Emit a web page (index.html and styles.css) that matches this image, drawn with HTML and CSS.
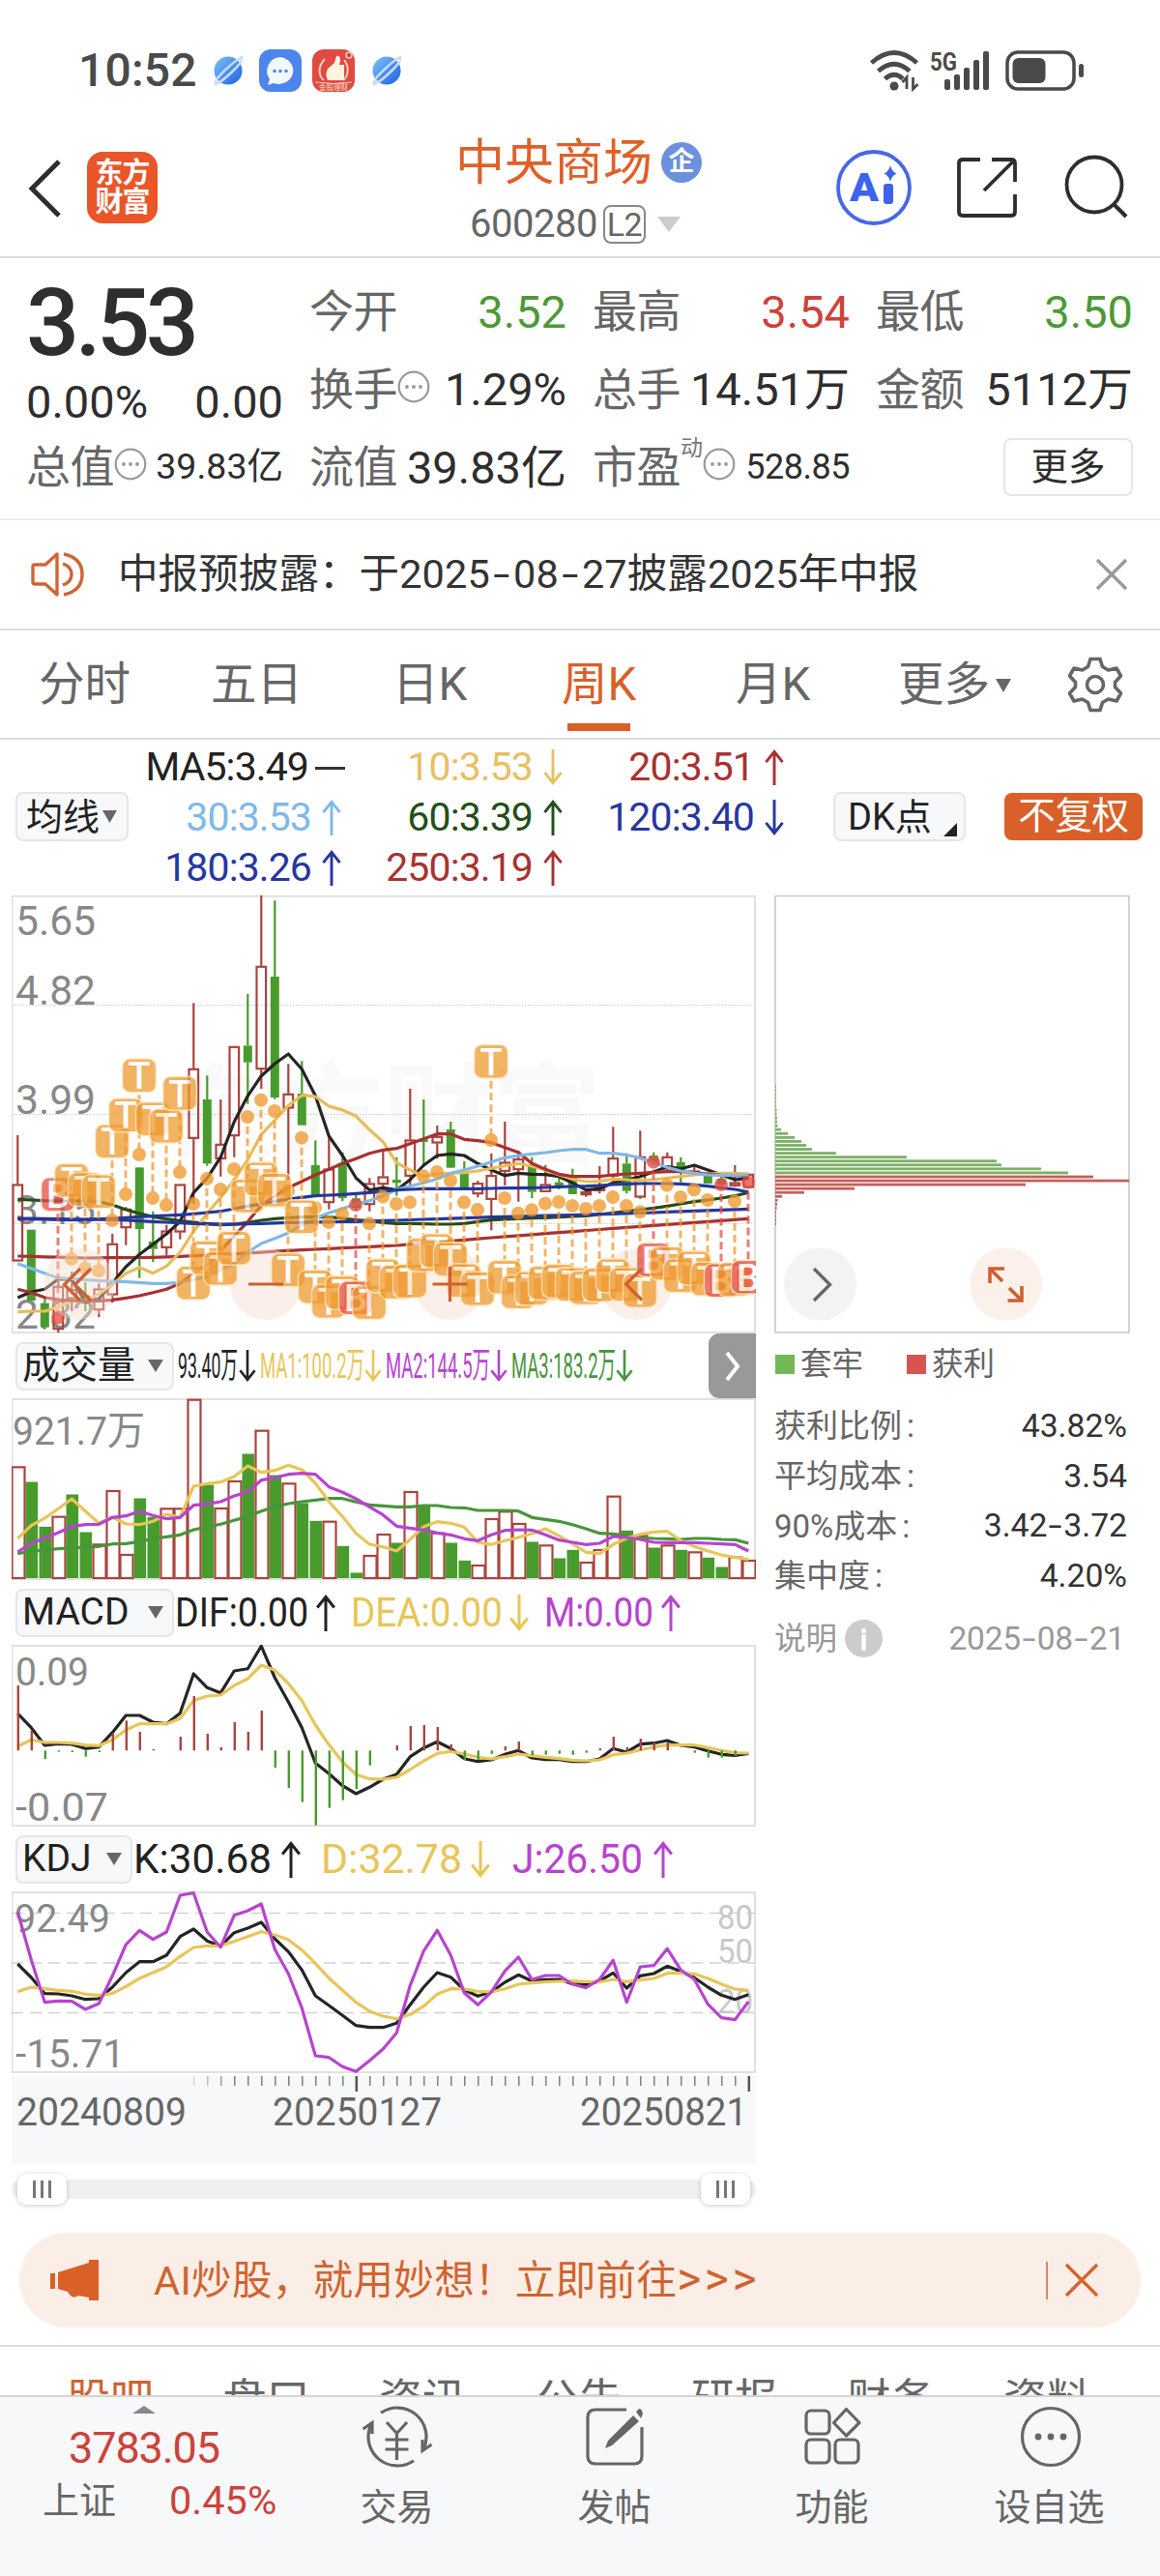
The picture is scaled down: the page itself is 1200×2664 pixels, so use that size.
FILE: index.html
```html
<!DOCTYPE html>
<html lang="zh-CN">
<head>
<meta charset="utf-8">
<title>中央商场 600280</title>
<link rel="stylesheet" href="styles.css">
</head>
<body>
<svg class="defs" width="0" height="0" aria-hidden="true">
  <defs>
    <symbol id="up" viewBox="0 0 20 38"><path d="M10 38V3M1.2 13.500L10 2.500L18.800 13.500" fill="none" stroke="currentColor" stroke-width="3"/></symbol>
    <symbol id="down" viewBox="0 0 20 38"><path d="M10 0V35M1.200 24.500L10 35.500L18.800 24.500" fill="none" stroke="currentColor" stroke-width="3"/></symbol>
    <symbol id="dots" viewBox="0 0 34 34"><circle cx="17" cy="17" r="15.300" fill="none" stroke="#999" stroke-width="2.200"/><circle cx="10" cy="17" r="1.900" fill="#999"/><circle cx="17" cy="17" r="1.900" fill="#999"/><circle cx="24" cy="17" r="1.900" fill="#999"/></symbol>
    <linearGradient id="sky" x1="0" y1="0" x2="1" y2="1"><stop offset="0" stop-color="#7cc4f8"/><stop offset="1" stop-color="#1c5fe0"/></linearGradient>
    <symbol id="planet" viewBox="0 0 34 34"><circle cx="17" cy="17" r="14.500" fill="url(#sky)"/><path d="M4 31C1 26 25 6 31 3C34 8 12 28 4 31Z" fill="none" stroke="#c9dcfb" stroke-width="2.500"/></symbol>
  </defs>
</svg>

<div class="status">
  <span class="clock">10:52</span>
  <svg class="s-planet" width="34" height="34"><use href="#planet"/></svg>
  <svg class="s-chat" width="44" height="44" viewBox="0 0 44 44"><rect width="44" height="44" rx="12" fill="#4c86ec"/><path d="M22 8a15 14 0 1 1-7 27l-6 2 2-6A14.500 14.500 0 0 1 22 8z" fill="#f2f8ff"/><circle cx="16" cy="22.500" r="1.800" fill="#4c86ec"/><circle cx="22" cy="22.500" r="1.800" fill="#4c86ec"/><circle cx="28" cy="22.500" r="1.800" fill="#4c86ec"/></svg>
  <svg class="s-red" width="44" height="44" viewBox="0 0 44 44"><rect width="44" height="44" rx="12" fill="#e04a40"/><path d="M13 10C5 18 7 28 12 32M33 11c6 8 4 17-1 21" fill="none" stroke="#f6cfc0" stroke-width="2"/><path d="M16 20l7-6 2-7c4-1 5 3 3 9h5v14q0 2-3 2H16q-3-6 0-12z" fill="#fff3e2"/><circle cx="38" cy="6" r="3" fill="none" stroke="#f6cfc0" stroke-width="1.500"/><path d="M3 34q19 3 38 0" stroke="#f6cfc0" fill="none"/><text x="22" y="42" font-size="7.500" text-anchor="middle" fill="#fbe0d2">金股理财</text></svg>
  <svg class="s-planet2" width="34" height="34"><use href="#planet"/></svg>
  <span class="spring"></span>
  <svg class="s-sys" width="224" height="44" viewBox="900 51 224 44">
    <g fill="none" stroke="#4a4a4a" stroke-width="4.800"><path d="M902.500 65Q926 44 949.500 65M909.500 73.500Q926 59 942 73.500M916.500 81.500Q926 73 935 81.500"/></g>
    <circle cx="926" cy="89" r="4.500" fill="#4a4a4a"/>
    <path d="M939 92V80l-4.500 5M945.500 80v12l5-5" fill="none" stroke="#4a4a4a" stroke-width="2.800"/>
    <text x="963" y="73" font-size="25" font-weight="700" fill="#4a4a4a" textLength="28" lengthAdjust="spacingAndGlyphs">5G</text>
    <g fill="#4a4a4a"><rect x="978" y="82" width="6" height="11" rx="2"/><rect x="988" y="77" width="6" height="16" rx="2"/><rect x="998" y="70" width="6" height="23" rx="2"/><rect x="1008" y="62" width="6" height="31" rx="2"/><rect x="1018" y="53" width="6" height="40" rx="2"/></g>
    <rect x="1043" y="54" width="69" height="38" rx="11" fill="none" stroke="#4a4a4a" stroke-width="3.500"/><rect x="1048.500" y="60" width="34" height="26" rx="6" fill="#4a4a4a"/><rect x="1117" y="66" width="5" height="14" rx="2.500" fill="#4a4a4a"/>
  </svg>
</div>

<header class="head">
  <svg class="back" width="36" height="62" viewBox="0 0 36 62"><path d="M33 3L5 31L33 59" fill="none" stroke="#2e2e2e" stroke-width="5"/></svg>
  <div class="logo"><span>东方</span><span>财富</span></div>
  <div class="title">
    <div class="name"><span>中央商场</span><i>企</i></div>
    <div class="code"><span>600280</span><b>L2</b><svg width="24" height="16"><path d="M0 0H24L12 16Z" fill="#ccc"/></svg></div>
  </div>
  <svg class="tools" width="302" height="82" viewBox="866 155 302 82">
    <circle cx="905" cy="196" r="37" fill="none" stroke="#4667e8" stroke-width="3.800"/>
    <text x="880" y="210" font-size="40" font-weight="900" fill="#3d63ee" textLength="30" lengthAdjust="spacingAndGlyphs">A</text><rect x="915" y="192" width="10" height="21" rx="3" fill="#3d63ee"/><path d="M922 173q1.500 6.500 6.500 8.500q-5 2-6.500 8.500q-1.500-6.500-6.500-8.500q5-2 6.500-8.500z" fill="#3d63ee"/>
    <path d="M1015 167H997q-4 0-4 4v50q0 4 4 4h50q4 0 4-4v-18M1027 167h20q4 0 4 4v19M1050 168L1019 199" fill="none" stroke="#2e2e2e" stroke-width="3.800"/>
    <circle cx="1133" cy="193" r="28.500" fill="none" stroke="#2e2e2e" stroke-width="3.800"/><path d="M1153 213l13 13" stroke="#2e2e2e" stroke-width="4.200"/>
  </svg>
</header>

<section class="quote">
  <div class="col first">
    <div class="price">3.53</div>
    <div class="chg"><span>0.00%</span><span>0.00</span></div>
    <div class="r3"><label>总值</label><svg width="34" height="34"><use href="#dots"/></svg><em class="s38">39.83亿</em></div>
  </div>
  <div class="col">
    <div><label>今开</label><em class="green">3.52</em></div>
    <div><label>换手</label><svg width="34" height="34"><use href="#dots"/></svg><em>1.29%</em></div>
    <div><label>流值</label><em>39.83亿</em></div>
  </div>
  <div class="col">
    <div><label>最高</label><em class="red">3.54</em></div>
    <div><label>总手</label><em>14.51万</em></div>
    <div><label>市盈</label><sup>动</sup><svg width="34" height="34"><use href="#dots"/></svg><em class="s36">528.85</em></div>
  </div>
  <div class="col">
    <div><label>最低</label><em class="green">3.50</em></div>
    <div><label>金额</label><em>5112万</em></div>
    <div class="end"><button>更多</button></div>
  </div>
</section>

<div class="notice">
  <svg width="56" height="48" viewBox="0 0 56 48"><g fill="none" stroke="#cf6634" stroke-width="3.400" stroke-linejoin="round"><path d="M26 3v42L14 34H3q-2 0-2-2V16q0-2 2-2h11z" transform="translate(1 0)"/><path d="M33 13q9 3 9 11t-9 11M34 3q19 4 19 21T34 45"/></g></svg>
  <span>中报预披露：于2025<u>-</u>08<u>-</u>27披露2025年中报</span>
  <svg width="34" height="34" viewBox="0 0 34 34"><path d="M2 2L32 32M32 2L2 32" stroke="#999" stroke-width="3.400"/></svg>
</div>

<nav class="tabs">
  <span class="t1">分时</span><span class="t2">五日</span><span class="t3">日K</span><span class="t4 on">周K</span><span class="t5">月K</span><span class="t6">更多<svg width="16" height="14"><path d="M0 0H16L8 14Z" fill="#666"/></svg></span>
  <svg class="gear" width="58" height="58" viewBox="0 0 58 58"><path d="M24 2.500h10l2.500 8 6 3.500 8.500-2 4.500 8-6 6.500v5l6 6.500-4.500 8-8.500-2-6 3.500-2.500 8H24l-2.500-8-6-3.500-8.500 2-4.500-8 6-6.500v-5l-6-6.500 4.500-8 8.500 2 6-3.500z" fill="none" stroke="#666" stroke-width="3.600" stroke-linejoin="round"/><circle cx="29" cy="29" r="8.500" fill="none" stroke="#666" stroke-width="3.600"/></svg>
</nav>

<section class="mas">
  <button class="pill avg">均线<svg width="15" height="13"><path d="M0 0H15L7.500 13Z" fill="#666"/></svg></button>
  <div class="values">
    <span class="black">MA5:3.49<i class="dash"></i></span><span class="gold">10:3.53<svg><use href="#down"/></svg></span><span class="crimson">20:3.51<svg><use href="#up"/></svg></span>
    <span class="sky">30:3.53<svg><use href="#up"/></svg></span><span class="forest">60:3.39<svg><use href="#up"/></svg></span><span class="navy">120:3.40<svg><use href="#down"/></svg></span>
    <span class="navy">180:3.26<svg><use href="#up"/></svg></span><span class="crimson">250:3.19<svg><use href="#up"/></svg></span>
  </div>
  <button class="pill dk">DK点<svg width="14" height="14"><path d="M14 0V14H0Z" fill="#222"/></svg></button>
  <button class="adj">不复权</button>
</section>

<main class="body">
  <div class="charts">
    <svg id="kline" width="770" height="453" viewBox="12 926 770 453"></svg>
    <div class="bar">
      <button class="pill ind">成交量<svg width="16" height="13"><path d="M0 0H16L8 13Z" fill="#666"/></svg></button>
      <svg class="legend" width="550" height="67" viewBox="182 1379 550 67" font-size="37">
        <g fill="#222" color="#222"><text x="184" y="1425" textLength="62" lengthAdjust="spacingAndGlyphs">93.40万</text><use href="#down" x="247" y="1396" width="18" height="33"/></g>
        <g fill="#e8c558" color="#e8c558"><text x="269" y="1425" textLength="108" lengthAdjust="spacingAndGlyphs">MA1:100.2万</text><use href="#down" x="377" y="1396" width="18" height="33"/></g>
        <g fill="#b744cf" color="#b744cf"><text x="399" y="1425" textLength="108" lengthAdjust="spacingAndGlyphs">MA2:144.5万</text><use href="#down" x="507" y="1396" width="18" height="33"/></g>
        <g fill="#48953a" color="#48953a"><text x="529" y="1425" textLength="108" lengthAdjust="spacingAndGlyphs">MA3:183.2万</text><use href="#down" x="637" y="1396" width="18" height="33"/></g>
      </svg>
      <div class="more"><svg width="18" height="32"><path d="M3 2L14 16L3 30" fill="none" stroke="#fff" stroke-width="4"/></svg></div>
    </div>
    <svg id="volume" width="770" height="188" viewBox="12 1446 770 188"></svg>
    <div class="bar">
      <button class="pill ind">MACD<svg width="16" height="13"><path d="M0 0H16L8 13Z" fill="#666"/></svg></button>
      <svg class="legend" width="600" height="67" viewBox="182 1634 600 67" font-size="43">
        <g fill="#222" color="#222"><text x="181" y="1682" textLength="138" lengthAdjust="spacingAndGlyphs">DIF:0.00</text><use href="#up" x="327" y="1649" width="20" height="38"/></g>
        <g fill="#e8c558" color="#e8c558"><text x="363" y="1682" textLength="157" lengthAdjust="spacingAndGlyphs">DEA:0.00</text><use href="#down" x="527" y="1649" width="20" height="38"/></g>
        <g fill="#b744cf" color="#b744cf"><text x="563" y="1682" textLength="113" lengthAdjust="spacingAndGlyphs">M:0.00</text><use href="#up" x="684" y="1649" width="20" height="38"/></g>
      </svg>
    </div>
    <svg id="macd" width="770" height="188" viewBox="12 1701 770 188"></svg>
    <div class="bar">
      <button class="pill ind kdj">KDJ<svg width="16" height="13"><path d="M0 0H16L8 13Z" fill="#666"/></svg></button>
      <svg class="legend" width="640" height="67" viewBox="139 1889 640 67" font-size="43">
        <g fill="#222" color="#222"><text x="138" y="1937" textLength="143" lengthAdjust="spacingAndGlyphs">K:30.68</text><use href="#up" x="291" y="1904" width="20" height="38"/></g>
        <g fill="#e8c558" color="#e8c558"><text x="332" y="1937" textLength="146" lengthAdjust="spacingAndGlyphs">D:32.78</text><use href="#down" x="487" y="1904" width="20" height="38"/></g>
        <g fill="#b744cf" color="#b744cf"><text x="530" y="1937" textLength="135" lengthAdjust="spacingAndGlyphs">J:26.50</text><use href="#up" x="676" y="1904" width="20" height="38"/></g>
      </svg>
    </div>
    <svg id="kdj" width="770" height="188" viewBox="12 1956 770 188"></svg>
    <svg id="axis" width="770" height="91" viewBox="12 2147 770 91"></svg>
    <div class="slider"><b><i></i><i></i><i></i></b><b><i></i><i></i><i></i></b></div>
  </div>

  <aside class="chips">
    <svg id="chips" width="368" height="453" viewBox="801 926 368 453"></svg>
    <div class="key"><i class="kg"></i><span>套牢</span><i class="kr"></i><span>获利</span></div>
    <dl>
      <div><dt>获利比例<s>:</s></dt><dd>43.82%</dd></div>
      <div><dt>平均成本<s>:</s></dt><dd>3.54</dd></div>
      <div><dt>90%成本<s>:</s></dt><dd>3.42<u>-</u>3.72</dd></div>
      <div><dt>集中度<s>:</s></dt><dd>4.20%</dd></div>
    </dl>
    <div class="foot"><span>说明</span><svg width="39" height="39"><circle cx="19.500" cy="19.500" r="19.500" fill="#ccc"/><circle cx="19.500" cy="11.500" r="2.600" fill="#fff"/><path d="M19.500 17v13" stroke="#fff" stroke-width="4.400" stroke-linecap="round"/></svg><time>2025<u>-</u>08<u>-</u>21</time></div>
  </aside>
</main>

<div class="promo">
  <svg width="50" height="42" viewBox="0 0 50 42"><path d="M0 14h5v16H0zM8 13l32-10V0h10v42H40v-3l-11-2q-5 4-9-1l-2-3-10-3z" fill="#d96028"/></svg>
  <span>AI炒股，就用妙想！立即前往<b>&gt;&gt;&gt;</b></span>
  <i></i>
  <svg width="36" height="36" viewBox="0 0 36 36"><path d="M2 2L34 34M34 2L2 34" stroke="#d96028" stroke-width="3.200"/></svg>
</div>

<nav class="sub"><span class="on">股吧</span><span>盘口</span><span>资讯</span><span>公告</span><span>研报</span><span>财务</span><span>资料</span></nav>

<footer class="dock">
  <div class="index">
    <svg width="24" height="8"><path d="M0 8H24L12 0Z" fill="#888"/></svg>
    <strong>3783.05</strong>
    <p><span>上证</span><em>0.45%</em></p>
  </div>
  <div class="act"><svg width="72" height="64" viewBox="375 2488 72 64"><g fill="none" stroke="#666" stroke-width="3.200"><path d="M394 2495.300A30 30 0 0 1 438.500 2532M428 2544.700A30 30 0 0 1 383.500 2508M375.500 2512l9.500-6.500V2517M446.500 2528l-9.500 6.500V2523M400 2505l10.500 11.500 10.500-11.500M410.500 2516v28M398.500 2523h24M398.500 2533h24"/></g></svg><span>交易</span></div>
  <div class="act"><svg width="72" height="64" viewBox="600 2488 72 64"><path d="M648 2492H616q-8 0-8 8v40q0 8 8 8h40q8 0 8-8v-30" fill="none" stroke="#666" stroke-width="3.200"/><path d="M655 2498l6 6-28 25-7 3 3-8zM658 2494l3-3q3 0 4 5l-2 5z" fill="#666"/></svg><span>发帖</span></div>
  <div class="act"><svg width="72" height="64" viewBox="825 2488 72 64"><g fill="none" stroke="#666" stroke-width="3.200"><rect x="834" y="2493" width="24" height="24" rx="5"/><rect x="834" y="2523" width="24" height="24" rx="5"/><rect x="864" y="2523" width="24" height="24" rx="5"/><path d="M875.500 2491.500l13.500 14-13.500 13.500-13-13.500z" stroke-linejoin="round"/></g></svg><span>功能</span></div>
  <div class="act"><svg width="72" height="64" viewBox="1050 2488 72 64"><circle cx="1087" cy="2520" r="29.500" fill="none" stroke="#666" stroke-width="3.200"/><g fill="#666"><circle cx="1074" cy="2520" r="3.400"/><circle cx="1087" cy="2520" r="3.400"/><circle cx="1100" cy="2520" r="3.400"/></g></svg><span>设自选</span></div>
</footer>
<script src="charts.js"></script>
</body>
</html>
```
FILE: styles.css
```css
* { box-sizing: border-box; }
body { margin: 0; width: 1200px; height: 2664px; overflow: hidden; background: #fff; color: #333; font-family: Roboto, "Noto Sans CJK SC", sans-serif; line-height: 1; }
svg { display: block; flex: none; }
svg text { font-family: Roboto, "Noto Sans CJK SC", sans-serif; white-space: pre; }
button { font: inherit; padding: 0; border: 0; color: #222; }
em, i { font-style: normal; }
/* wide date hyphen */
u { display: inline-block; width: .58em; text-align: center; text-decoration: none; transform: scaleX(1.5); }
.defs { height: 0; }

.status { height: 145px; display: flex; align-items: center; padding: 1px 77px 0 81px; }
.clock { width: 138px; font-size: 48px; font-weight: 500; color: #4a4a4a; letter-spacing: .2px; }
.s-chat { margin-left: 15px; }
.s-red { margin-left: 11px; }
.s-planet2 { margin-left: 16px; }
.spring { flex: 1; }

.head { height: 122px; border-bottom: 2px solid #dcdcdc; display: flex; align-items: flex-start; padding-left: 28px; }
.back { margin-top: 19px; }
.logo { margin: 12px 0 0 26px; width: 73px; height: 74px; border-radius: 16px; background: #ea5529; color: #fff; font-size: 29px; font-weight: 700; line-height: 30px; display: flex; flex-direction: column; align-items: center; justify-content: center; letter-spacing: -1px; }
.title { width: 310px; margin: -2px 0 0 307px; display: flex; flex-direction: column; }
.name { display: flex; height: 50px; align-items: center; color: #df6029; font-size: 51px; padding-left: 1px; font-weight: 400; }
.name i { width: 42px; height: 42px; border-radius: 50%; background: #6b90de; color: #fff; font-size: 27px; font-weight: 700; text-align: center; line-height: 40px; margin: 0 0 0 9px; letter-spacing: 0; }
.code { display: flex; align-items: center; margin-top: 18px; padding-left: 16px; color: #666; font-size: 40px; height: 42px; letter-spacing: -.5px; }
.code b { font-weight: 400; width: 44px; height: 40px; border: 2px solid #888; border-radius: 8px; font-size: 34px; line-height: 37px; text-align: center; margin: 0 12px 0 6px; }
.tools { margin: 8px 0 0 85px; }

.quote { height: 271px; border-bottom: 2px solid #ececec; display: grid; grid-template-columns: 266px 266px 266px 266px; column-gap: 27px; padding: 15px 0 0 27px; }
.col > div { height: 80.500px; display: flex; align-items: center; }
.col label { font-size: 46px; color: #666; letter-spacing: -.5px; width: 92px; }
.col label + svg, .col sup + svg { margin: -6px 0 0 -1px; }
.col em { margin-left: auto; font-size: 47px; color: #2e2e2e; white-space: nowrap; }
.col em.s38 { font-size: 37.500px; }
.col em.s36 { font-size: 36px; letter-spacing: -.5px; }
.col em.green { color: #4c9a35; }
.col em.red { color: #cc4339; }
.col sup { font-size: 23px; color: #777; margin: -40px 0 0 -1px; width: 24px; }
.col.first .price { height: 104px; font-size: 97px; font-weight: 500; letter-spacing: -4.500px; color: #2e2e2e; }
.col.first .chg { height: 56.500px; justify-content: space-between; align-items: flex-start; font-size: 47px; color: #2e2e2e; padding-top: 6px; }
.end { justify-content: flex-end; }
.end button { width: 134px; height: 60px; border: 2px solid #e6e6e6; border-radius: 8px; background: #fff; font-size: 38.500px; color: #2e2e2e; }

.notice { height: 114px; border-bottom: 2px solid #dcdcdc; display: flex; align-items: center; padding: 0 33px 0 32px; }
.notice span { flex: 1; margin-left: 34px; font-size: 41.500px; letter-spacing: .1px; }

.tabs { height: 113px; border-bottom: 2px solid #dcdcdc; display: flex; align-items: center; font-size: 47.500px; color: #666; padding-left: 40px; }
.tabs span { height: 111px; display: flex; align-items: center; padding-top: 2px; white-space: nowrap; }
.t1 { width: 178px; } .t2 { width: 188px; } .t3 { width: 175px; } .t4 { width: 180px; } .t5 { width: 168px; } .t6 { width: 175px; }
.t6 svg { margin-left: 6px; }
.tabs .on { color: #d96028; background: linear-gradient(#d96028, #d96028) 6px 96px / 65px 8px no-repeat; }

.mas { height: 161px; display: flex; align-items: flex-start; padding-left: 16px; }
.pill { height: 51px; background: #f6f8fa; border: 2px solid #e4e6ea; border-radius: 8px; display: flex; align-items: center; }
.avg { width: 117px; margin-top: 54px; font-size: 38px; padding-left: 9px; }
.avg svg { margin-left: 3px; }
.values { display: grid; grid-template-columns: 220px 229px 229px; grid-auto-rows: 52px; margin-top: 2px; width: 678px; font-size: 41px; letter-spacing: -.9px; }
.values span { display: flex; align-items: center; justify-content: flex-end; white-space: nowrap; }
.values svg { width: 20px; height: 37px; margin-left: 11px; }
.dash { width: 31px; height: 3px; background: #333; margin: 2px -4px 0 7px; }
.black { color: #222; } .gold { color: #e9bf63; } .crimson { color: #a83232; } .sky { color: #7fb9ea; } .forest { color: #234f17; } .navy { color: #26379f; }
.dk { width: 137px; margin: 54px 0 0 51px; font-size: 38px; padding-left: 13px; }
.dk svg { margin: 26px 0 0 12px; }
.adj { width: 143px; height: 49px; margin: 55px 0 0 40px; background: #d96028; border-radius: 8px; color: #fff; font-size: 38.500px; letter-spacing: -.3px; }

.body { display: flex; height: 1379px; padding-left: 12px; }
.charts { width: 770px; display: flex; flex-direction: column; }
.bar { height: 67px; display: flex; align-items: center; padding-left: 4px; }
.ind { width: 164px; height: 50px; font-size: 39px; padding: 0 9px 0 5px; justify-content: space-between; white-space: nowrap; }
.ind.kdj { width: 121px; }
.legend { margin-left: 2px; }
.more { width: 49px; height: 67px; margin-left: auto; background: #999; border-radius: 11px 0 0 11px; display: flex; align-items: center; justify-content: center; }
#axis { margin-top: 3px; }
.slider { margin-top: 16px; width: 770px; height: 20px; border-radius: 10px; background: #f0f0f3; display: flex; align-items: center; justify-content: space-between; padding: 0 6px; }
.slider b { flex: none; width: 51px; height: 32px; border-radius: 9px; background: #fff; box-shadow: 0 1px 5px rgba(0,0,0,.2); display: flex; align-items: center; justify-content: center; gap: 5px; }
.slider i { width: 3px; height: 18px; background: #777; }

.chips { width: 368px; margin-left: 19px; }
.key { display: flex; align-items: center; height: 64px; padding-left: 1px; font-size: 32.500px; color: #666; }
.key i { width: 20px; height: 20px; background: #74b757; margin-right: 6px; }
.key .kr { background: #d9544f; margin-left: 45px; }
.chips dl { margin: 6px 3px 0 0; font-size: 33px; color: #666; }
.chips dl div { height: 51.700px; display: flex; align-items: center; justify-content: space-between; }
.chips s { text-decoration: none; margin-left: 5px; }
.chips dd { margin: 0; color: #333; font-size: 33.700px; }
.chips u { width: .5em; }
.foot { margin: 17px 5px 0 0; height: 44px; display: flex; align-items: center; font-size: 32.500px; color: #999; }
.foot svg { margin-left: 8px; }
.foot time { margin-left: auto; font-size: 33.500px; letter-spacing: -.2px; }

.promo { margin: 4px 20px 0; height: 98px; border-radius: 49px; background: #fbeee6; display: flex; align-items: center; padding: 0 43px 0 32px; color: #cf6430; font-size: 41.500px; }
.promo span { margin-left: 57px; flex: 1; letter-spacing: .35px; }
.promo b { font-weight: 400; font-size: 48px; line-height: 41px; letter-spacing: 3.500px; }
.promo i { width: 2px; height: 39px; background: #d98a63; margin-right: 17px; }

.sub { margin-top: 18px; height: 52px; border-top: 2px solid #dcdcdc; overflow: hidden; display: flex; padding: 33px 0 0 69px; font-size: 45px; color: #666; }
.sub span { flex: none; width: 161.500px; }
.sub .on { color: #cf6430; }

.dock { height: 187px; border-top: 2px solid #d4d4d4; background: #f7f8fa; display: flex; color: #666; }
.index { width: 298px; display: flex; flex-direction: column; }
.index svg { margin: 9px 0 0 137px; }
.index strong { font-weight: 400; font-size: 45px; color: #cc4339; letter-spacing: -1.100px; margin: 13px 0 0 71px; }
.index p { margin: 11px 0 0 44px; display: flex; align-items: center; font-size: 38px; }
.index em { font-size: 41.500px; color: #cc4339; margin-left: 55px; }
.act { width: 225px; display: flex; flex-direction: column; align-items: center; font-size: 38px; }
.act svg { margin: 9px 0 22px; }
```
FILE: charts.js
```js
// Series are stored in thirds of a pixel, measured from each panel's base line.
const X0 = 18.3, STEP = 14;
const px = i => X0 + STEP * i;
const RED = '#ab443d', GREEN = '#489c2d';
const line = (v, base, color, w = 3.2) =>
  `<polyline fill="none" stroke="${color}" stroke-width="${w}" stroke-linejoin="round" points="${v.map((y, i) => px(i) + ',' + (base + y / 3).toFixed(1)).join(' ')}"/>`;
const spread = keys => Array.from({ length: 55 }, (_, i) => {
  let k = 0; while (k < keys.length - 2 && keys[k + 1][0] < i) k++;
  const [a, b] = keys[k], [c, d] = keys[k + 1];
  return b + (d - b) * (i - a) / (c - a);
});
const frame = (top, bottom, color = '#dedede') => `<rect x="12.500" y="${top}" width="768.500" height="${bottom - top}" fill="none" stroke="${color}" stroke-width="1.800"/>`;
const label = (x, y, w, t, size = 43, color = '#888') => `<text x="${x}" y="${y}" font-size="${size}" fill="${color}" textLength="${w}" lengthAdjust="spacingAndGlyphs">${t}</text>`;
const put = (id, s) => { document.getElementById(id).innerHTML = s; };

// kind, high, body top, body bottom, low
const candles = `R 762 914 1153 1153|G 1055 1055 1275 1275|G 1270 1283 1358 1364|R 1215 1230 1365 1375|R 1185 1240 1270 1308|G 1218 1258 1285 1308|R 1222 1238 1305 1327|R 1068 1098 1258 1282|R 985 990 1050 1103|G 862 862 1053 1205|G 998 1092 1115 1155|R 1040 1058 1112 1135|R 914 914 1063 1085|R 352 555 773 975|G 577 651 850 857|R 651 789 836 890|R 486 486 765 830|G 324 484 536 665|R 18 237 558 618|G 34 270 645 650|R 541 633 679 900|G 532 633 731 731|G 778 855 948 948|R 770 866 972 992|G 815 848 957 967|G 940 958 988 995|R 895 911 978 998|R 811 890 915 935|G 830 900 910 950|R 618 776 890 925|G 651 775 783 860|R 732 765 787 835|G 720 744 863 863|G 843 873 928 928|R 903 910 945 955|R 818 886 962 1057|R 720 845 875 918|R 811 835 870 968|G 830 857 938 957|R 855 914 938 938|G 895 908 918 930|G 866 890 945 945|R 930 937 948 953|R 858 920 935 943|R 736 832 890 910|G 818 850 935 943|R 748 828 955 960|G 815 825 850 855|R 815 828 868 870|G 830 846 870 908|R 855 872 880 885|G 880 885 912 912|G 890 897 915 918|R 855 908 920 922|R 882 882 925 925`.split('|').map(s => s.split(' ').map((v, i) => i ? +v : v));
// index, letter, badge centre, dot centre
const marks = `3 B 946 1328|4 T 902 1146|5 T 930 1175|6 T 937 1183|7 T 781 1026|8 T 700 945|9 T 577 822|10 T 712 957|11 T 734 979|12 T 632 877|13 T 1220 975|14 T 1142 897|15 T 1175 930|16 T 1112 867|17 T 950 705|18 T 898 653|19 T 932 687|20 T 1180 935|21 T 1015 770|22 T 1232 987|23 T 1277 1032|24 T 1250 1006|25 B 1267 978|26 T 1281 1036|27 T 1198 953|28 T 1218 975|29 T 1214 970|30 T 1133 889|31 T 1120 876|32 T 1147 903|33 T 1213 970|34 T 1238 993|35 T 533 777|36 T 1202 957|37 T 1248 1004|38 T 1237 994|39 T 1220 974|40 T 1214 969|41 T 1225 981|42 T 1235 990|43 T 1226 981|44 T 1198 954|45 T 1225 981|46 T 1244 1000|47 B 1148 845|48 T 1160 917|49 T 1198 954|50 T 1174 931|51 T 1208 963|52 B 1213 915|53 T 1209 967|54 B 1202 908`.split('|').map(s => s.split(' '));

const ma5 = [1266,1248,1240,1208,1210,1280,1270,1220,1170,1132,1100,1068,1030,940,895,830,720,640,578,540,510,557,640,765,825,895,932,925,932,900,855,825,820,825,850,870,887,880,883,884,890,910,932,928,910,900,890,875,860,866,855,870,885,900,895];
const ma10 = [1310,1308,1308,1295,1275,1275,1255,1225,1190,1172,1190,1168,1125,1060,1005,955,900,838,760,715,670,638,642,672,684,703,745,783,848,870,890,882,880,878,873,865,857,850,858,870,885,898,906,905,898,900,902,900,895,890,885,882,880,880,882];
const ma20 = [1240,1250,1265,1273,1275,1276,1276,1273,1267,1260,1250,1240,1222,1190,1165,1120,1075,1030,980,950,925,905,885,868,850,835,818,808,803,788,773,758,758,775,779,785,800,815,850,868,883,890,890,890,885,882,880,877,875,875,878,882,886,888,888];
const ma30 = [1160,1175,1190,1205,1207,1210,1213,1215,1217,1219,1222,1222,1218,1210,1200,1180,1160,1125,1098,1082,1065,1040,1020,1003,990,975,965,950,930,920,910,898,880,870,858,845,832,825,820,816,810,806,806,818,818,823,833,847,862,873,880,885,886,886,885];
const ma60 = [961,963,965,966,966,966,968,978,993,1005,1015,1022,1028,1032,1036,1038,1038,1033,1026,1021,1018,1016,1015,1016,1020,1025,1028,1033,1036,1036,1037,1038,1038,1036,1030,1025,1023,1021,1019,1018,1016,1014,1012,1008,1003,998,993,988,982,975,968,963,957,950,940];
const ma120 = [1022,1022,1023,1024,1025,1024,1022,1020,1018,1015,1013,1011,1009,1006,1002,998,990,982,975,967,960,955,950,948,946,943,940,936,932,930,928,928,928,928,928,927,926,926,925,924,922,921,920,918,915,913,912,912,912,913,916,920,925,930,938];
const ma180 = spread([[0,1020],[7,1024],[13,1036],[15,1040],[20,1033],[25,1030],[28,1026],[35,1016],[45,1005],[54,991]]);
const ma250 = spread([[0,1137],[5,1143],[10,1141],[15,1133],[20,1120],[28,1104],[35,1080],[45,1048],[54,1021]]);

let k = '';
k += `<text x="172" y="1194" font-size="113" font-weight="700" fill="#f9f9f9" textLength="450">东方财富</text>`;
[1039, 1152, 1265].forEach(y => { k += `<path d="M12 ${y}.500H781" stroke="#ccc" stroke-dasharray="1.500 1.500"/>`; });
k += frame(926.8, 1378);
k += label(16, 967, 83, '5.65') + label(16, 1038.5, 83, '4.82') + label(16, 1152, 83, '3.99') + label(16, 1265.5, 83, '3.15') + label(16, 1374, 83, '2.32');
candles.forEach(([c, h, t, b, l], i) => {
  const x = px(i), Y = v => 920 + v / 3, col = c === 'R' ? RED : GREEN;
  k += `<path d="M${x} ${Y(h)}V${Y(t)}M${x} ${Y(b)}V${Y(l)}" stroke="${col}" stroke-width="2.200"/>`;
  k += c === 'R'
    ? `<rect x="${x - 4.8}" y="${Y(t) + .8}" width="9.600" height="${Math.max(Y(b) - Y(t) - 1.6, 2)}" fill="none" stroke="${col}" stroke-width="2.200"/>`
    : `<rect x="${x - 4.5}" y="${Y(t)}" width="9" height="${Math.max(Y(b) - Y(t), 2)}" fill="${col}"/>`;
});
k += line(ma250, 920, '#a63232') + line(ma60, 920, '#254d16') + line(ma5, 920, '#252525') + line(ma10, 920, '#e7bd58') + line(ma20, 920, '#a83030') + line(ma30, 920, '#80b9e8') + line(ma180, 920, '#25369c') + line(ma120, 920, '#25369c');
marks.forEach(([i, t, b, c]) => {
  const x = px(+i) - .3, by = 920 + b / 3, cy = 920 + c / 3, col = t === 'T' ? '#ee992e' : '#e64d43';
  k += `<path d="M${x} ${by < cy ? by + 20 : cy + 10}V${by < cy ? cy - 6 : by - 18}" stroke="${col}" stroke-width="3" stroke-dasharray="8 4.300" opacity=".72"/>`;
  k += `<circle cx="${x}" cy="${cy}" r="7" fill="${col}" opacity=".78"/>`;
});
[82, 275, 465, 658].forEach(x => { k += `<circle cx="${x}" cy="1328" r="37" fill="#f6ddcf" opacity=".45"/>`; });
marks.forEach(([i, t, b]) => {
  const x = px(+i) - .3, y = 920 + b / 3, col = t === 'T' ? '#ee992e' : '#e64d43';
  k += `<g opacity=".74"><rect x="${x - 17.5}" y="${y - 17.5}" width="35" height="35" rx="8" fill="${col}" stroke="#ffe9bd" stroke-width="1.500"/><text x="${x}" y="${y + 14}" font-size="38" font-weight="500" text-anchor="middle" fill="#fff">${t}</text></g>`;
});
k += `<g fill="none" stroke="#cf6030" stroke-width="3.200"><path d="M83 1312L66.500 1328.500L83 1345M94 1312L77.500 1328.500L94 1345M257 1328H293M447.500 1328H483.500M465.500 1310V1346M664 1312L647.500 1328L664 1344.500"/></g>`;
put('kline', k);

const vol = 'R412 G459 G598 R566 G498 G615 R652 R486 R684 G510 G568 R541 R541 R203 G468 R540 R456 G372 R299 G438 R463 G525 G580 R581 G658 G741 R687 R621 G648 R489 G530 R617 G648 G703 R717 R573 R550 R588 G645 R655 G696 G670 R708 R669 R503 G610 R625 G663 R655 G670 R676 G694 G723 R692 R702'.split(' ');
const v1 = [633,593,570,541,510,548,586,567,588,590,580,558,568,471,463,458,441,408,428,422,406,420,462,519,565,617,651,659,672,636,596,581,586,598,645,652,640,630,618,603,625,650,676,680,652,632,620,613,611,640,658,672,684,692,698];
const v2 = [675,648,632,615,596,590,589,568,563,549,562,572,568,530,526,519,501,489,452,445,434,431,434,473,490,510,535,560,595,601,607,616,622,634,640,622,608,606,607,622,638,645,652,648,627,630,636,645,646,646,646,648,650,652,672];
const v3 = [680,672,670,665,663,660,658,650,649,643,633,628,622,606,597,589,577,565,548,535,525,519,514,509,509,520,529,532,535,535,531,531,537,538,546,546,546,548,568,574,580,590,603,617,619,624,630,633,634,636,633,633,636,637,648];
let v = frame(1447, 1633) + label(13, 1494, 137, '921.7万', 41);
vol.forEach((s, i) => {
  const x = px(i) + .5, y = 1380 + s.slice(1) / 3;
  v += s[0] === 'R'
    ? `<rect x="${x - 6.3}" y="${y}" width="13" height="${1632 - y}" fill="#fff" stroke="${RED}" stroke-width="2.200"/>`
    : `<rect x="${x - 6.3}" y="${y - .5}" width="12.600" height="${1632.5 - y}" fill="${GREEN}"/>`;
});
v += line(v3, 1380, '#48953a') + line(v1, 1380, '#e8c558') + line(v2, 1380, '#b744cf');
put('volume', v);

const hist = [309,450,537,515,516,530,516,458,418,453,507,511,468,342,459,501,423,453,387,564,627,671,743,689,665,630,557,511,495,435,432,438,492,540,540,521,498,483,525,524,521,524,518,504,468,501,474,486,486,511,518,533,533,528,511];
const dif = [396,440,495,490,492,505,500,455,402,402,423,428,395,273,316,332,264,257,187,285,360,440,550,583,620,645,625,600,585,530,503,484,505,536,545,540,523,511,534,539,539,545,545,537,505,516,491,488,480,495,500,512,523,526,520];
const dea = [498,478,486,486,488,494,496,478,447,428,428,428,412,356,342,339,309,288,246,262,303,356,432,493,547,585,599,600,594,570,543,520,514,522,532,537,530,522,527,532,536,541,543,540,524,519,509,500,494,494,494,502,511,518,519];
let m = frame(1702, 1888) + label(16, 1743, 76, '0.09', 41) + label(16, 1883, 96, '-0.07', 41);
m += line(dif, 1640, '#252525') + line(dea, 1640, '#e8c558');
hist.forEach((y, i) => { if (y !== 511) m += `<path d="M${px(i) + .5} 1810.300V${1640 + y / 3}" stroke="${y < 511 ? RED : GREEN}" stroke-width="2.400"/>`; });
put('macd', m);

const K = [393,435,485,486,492,503,501,465,420,386,386,366,308,285,322,338,296,282,264,315,355,412,492,522,553,584,590,590,577,520,465,420,434,474,493,480,450,427,446,442,441,455,458,446,421,468,430,423,400,416,436,465,490,503,488];
const D = [479,465,470,475,478,487,490,485,463,438,420,402,370,342,337,337,323,308,293,303,318,350,392,437,475,512,540,555,563,550,524,487,470,471,478,480,470,456,452,449,447,446,448,449,441,448,443,438,422,422,424,438,456,471,475];
const J = [232,380,512,508,509,534,516,430,333,289,317,294,180,173,294,341,242,228,207,348,423,530,678,683,712,727,693,657,607,460,353,289,366,483,520,480,415,372,442,429,429,456,467,441,382,512,402,398,346,412,441,518,560,566,510];
let q = frame(1957, 2143);
[1978.5, 2030, 2081.5].forEach(y => { q += `<path d="M12 ${y}H781" stroke="#d2d2d2" stroke-width="1.400" stroke-dasharray="12 7"/>`; });
q += label(742, 1995, 37, '80', 35, '#c8c8c8') + label(742, 2029.5, 37, '50', 35, '#c8c8c8') + label(742, 2081.5, 37, '20', 35, '#c8c8c8');
q += label(15, 1998, 99, '92.49', 41) + label(16, 2138, 113, '-15.71', 41);
q += line(K, 1900, '#252525') + line(D, 1900, '#e8c558') + line(J, 1900, '#b744cf');
put('kdj', q);

let a = '<rect x="12" y="2147" width="770" height="91" fill="#f7f8fa"/>';
for (let i = 13; i < 55; i++) {
  const major = i === 25 || i === 54;
  a += `<path d="M${px(i) + .5} 2147V${major ? 2163 : 2157}" stroke="${major ? '#555' : '#777'}" stroke-width="${major ? 2.5 : 1.4}" opacity="${i < 16 ? (i - 12) * .25 : 1}"/>`;
}
a += label(17, 2198, 176, '20240809', 40, '#666') + label(282, 2198, 175, '20250127', 40, '#666') + label(600, 2198, 173, '20250821', 40, '#666');
put('axis', a);

const trapped = [1,1,1,1,1,1,1.5,1.5,2,2,2.5,6,13,20,27,32,38,63,136,229,234,275,303];
const profit = [329,366,259,82,30,7,2.5,2,1.5,1,1,1,1];
let c = '<rect x="802" y="926.500" width="366" height="451.500" fill="none" stroke="#c8c8c8" stroke-width="1.600"/>';
trapped.forEach((w, i) => { c += `<rect x="802" y="${1211.5 - (22 - i) * 4.06}" width="${w}" height="2.800" fill="#7cb165"/>`; });
profit.forEach((w, i) => { c += `<rect x="802" y="${1215.6 + i * 4.06}" width="${w}" height="2.800" fill="#c4605b"/>`; });
c += '<circle cx="848.500" cy="1328" r="37.500" fill="#f3f3f3"/><path d="M842 1312L858.500 1328.500L842 1345" fill="none" stroke="#666" stroke-width="3.400"/>';
c += '<circle cx="1040.500" cy="1328" r="37.500" fill="#fbf1ea"/><path d="M1039 1312H1024V1327M1024.500 1312.500L1037 1325M1042.500 1345H1057V1330M1056.500 1344.500L1044 1332" fill="none" stroke="#cf6030" stroke-width="3.600"/>';
put('chips', c);
```
